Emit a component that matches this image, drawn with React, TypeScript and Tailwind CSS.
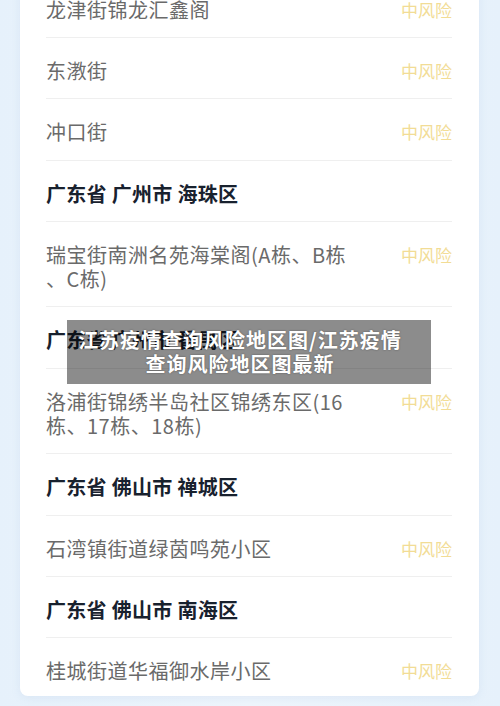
const rows: { kind: 'head' | 'item'; lines: string[] }[] = [
  { kind: 'item', lines: ['龙津街锦龙汇鑫阁'] },
  { kind: 'item', lines: ['东漖街'] },
  { kind: 'item', lines: ['冲口街'] },
  { kind: 'head', lines: ['广东省 广州市 海珠区'] },
  { kind: 'item', lines: ['瑞宝街南洲名苑海棠阁(A栋、B栋', '、C栋)'] },
  { kind: 'head', lines: ['广东省 广州市 番禺区'] },
  { kind: 'item', lines: ['洛浦街锦绣半岛社区锦绣东区(16', '栋、17栋、18栋)'] },
  { kind: 'head', lines: ['广东省 佛山市 禅城区'] },
  { kind: 'item', lines: ['石湾镇街道绿茵鸣苑小区'] },
  { kind: 'head', lines: ['广东省 佛山市 南海区'] },
  { kind: 'item', lines: ['桂城街道华福御水岸小区'] },
];

export default function App() {
  return (
    <div className="relative w-[500px] h-[706px] overflow-hidden bg-gradient-to-r from-[#e6f1fb] via-[#eef5fc] to-[#e6f1fb] font-['Noto_Sans_CJK_SC',sans-serif]">
      {/* list card */}
      <div className="ml-[20px] mr-[21px] -mt-[23.5px] bg-white rounded-lg pl-[26px] pr-[27px] shadow-[0_2px_10px_rgba(120,160,200,0.12)]">
        {rows.map((r, i) => (
          <div
            key={i}
            className={`flex items-start pt-[21px] ${i === rows.length - 1 ? 'pb-[13px]' : 'pb-[15.4px]'} ${i > 0 ? 'border-t border-[#efefef]' : ''}`}
          >
            {r.kind === 'head' ? (
              <div className="text-[20px] leading-[24px] font-bold text-[#18212e] tracking-[0.3px]">
                {r.lines[0]}
              </div>
            ) : (
              <>
                <div className="w-[312px] text-[20px] leading-[24px] text-[#6a6a6a] tracking-[0.5px]">
                  {r.lines.map((l, j) => (
                    <div key={j}>{l}</div>
                  ))}
                </div>
                <div className="ml-auto text-[17px] leading-[24px] text-[#f2dc95]">中风险</div>
              </>
            )}
          </div>
        ))}
      </div>

      {/* title overlay */}
      <div className="absolute left-[67px] top-[320px] w-[364px] h-[64px] pr-[18px] bg-black/45 flex flex-col items-center justify-center text-white font-bold text-[20px] leading-[24px] tracking-[1px] [text-shadow:0_0_2px_rgba(0,0,0,0.4)]">
        <div>江苏疫情查询风险地区图/江苏疫情</div>
        <div>查询风险地区图最新</div>
      </div>
    </div>
  );
}
